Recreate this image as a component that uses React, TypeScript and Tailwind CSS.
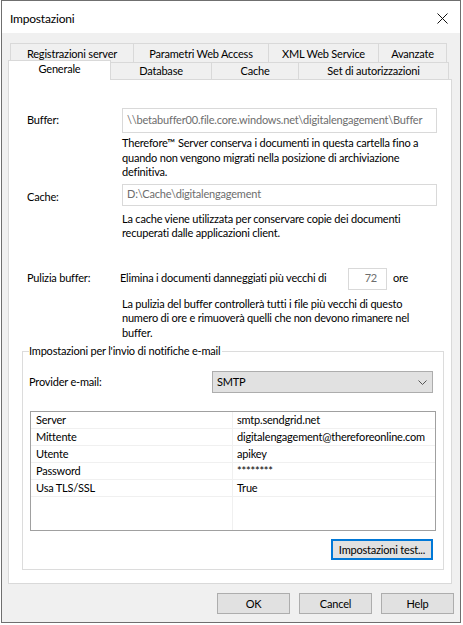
import React from 'react';

const font = { fontFamily: '"Segoe UI", Lato, "Noto Sans", sans-serif' };

const rows = [
  ['Server', 'smtp.sendgrid.net'],
  ['Mittente', 'digitalengagement@thereforeonline.com'],
  ['Utente', 'apikey'],
  ['Password', '********'],
  ['Usa TLS/SSL', 'True'],
];

export default function App() {
  return (
    <div className="w-[463px] h-[625px] bg-white text-[11px] tracking-[-0.2px] text-black" style={font}>
      <div className="ml-[1px] w-[460px] h-[623px] border border-[#6f6f6f] flex flex-col bg-[#f0f0f0]">
        {/* Title bar */}
        <div className="h-[32px] bg-white flex items-center justify-between pl-[8px] pr-[12px] shrink-0">
          <span className="text-[12px] pt-[4px]">Impostazioni</span>
          <svg width="11" height="11" viewBox="0 0 11 11" className="mt-[2px]">
            <path d="M0.5 0.5 L10.5 10.5 M10.5 0.5 L0.5 10.5" stroke="#111" strokeWidth="1" />
          </svg>
        </div>

        {/* Tabs */}
        <div className="mt-[10px] flex ml-[8px] h-[19px] whitespace-nowrap">
          {[
            ['Registrazioni server', 'w-[124px]'],
            ['Parametri Web Access', 'w-[135px]'],
            ['XML Web Service', 'w-[110px]'],
            ['Avanzate', 'w-[68px]'],
          ].map(([t, w], i) => (
            <div
              key={t}
              className={`${w} h-[19px] border-t border-r border-[#d9d9d9] ${i === 0 ? 'border-l' : ''} flex justify-center pt-[2px] leading-[15px]`}
            >
              {t}
            </div>
          ))}
        </div>
        <div className="-mt-[2px] flex items-end ml-[6px] h-[19px] whitespace-nowrap">
          <div className="relative top-[1px] z-10 w-[103px] h-[20px] bg-white border-t border-l border-r border-[#d9d9d9] flex justify-center leading-[15px]">
            Generale
          </div>
          {[
            ['Database', 'w-[101px]'],
            ['Cache', 'w-[87px]'],
            ['Set di autorizzazioni', 'w-[150px]'],
          ].map(([t, w]) => (
            <div
              key={t}
              className={`${w} h-[17px] border-t border-r border-[#d9d9d9] bg-[#f0f0f0] flex justify-center leading-[16px]`}
            >
              {t}
            </div>
          ))}
        </div>

        {/* Panel */}
        <div className="ml-[6px] w-[444px] h-[505px] bg-white border border-[#d9d9d9] flex flex-col">
          <div className="mt-[28px] flex items-center h-[25px] whitespace-nowrap">
            <span className="w-[113px] pl-[18px]">Buffer:</span>
            <div className="w-[315px] h-[25px] border border-[#d9d9d9] flex items-center pl-[4px] text-[#6d6d6d] overflow-hidden">
              \\betabuffer00.file.core.windows.net\digitalengagement\Buffer
            </div>
          </div>
          <p className="mt-[3px] ml-[113px] w-[318px] leading-[14.5px]">
            Therefore™ Server conserva i documenti in questa cartella fino a quando non vengono migrati nella posizione di archiviazione definitiva.
          </p>

          <div className="mt-[4px] flex items-center h-[22px] whitespace-nowrap">
            <span className="w-[113px] pl-[18px] pt-[6px]">Cache:</span>
            <div className="w-[315px] h-[22px] border border-[#d9d9d9] flex items-center pl-[4px] text-[#6d6d6d]">
              D:\Cache\digitalengagement
            </div>
          </div>
          <p className="mt-[6px] ml-[113px] w-[318px] leading-[14.5px]">
            La cache viene utilizzata per conservare copie dei documenti recuperati dalle applicazioni client.
          </p>

          <div className="mt-[27px] flex items-center h-[22px] whitespace-nowrap">
            <span className="w-[111px] pl-[18px]">Pulizia buffer:</span>
            <span className="w-[228px]">Elimina i documenti danneggiati più vecchi di</span>
            <div className="w-[39px] h-[22px] border border-[#d9d9d9] flex items-center justify-end pr-[9px] text-[#6d6d6d]">
              72
            </div>
            <span className="ml-[6px]">ore</span>
          </div>
          <p className="mt-[7px] ml-[113px] w-[318px] leading-[14.5px]">
            La pulizia del buffer controllerà tutti i file più vecchi di questo numero di ore e rimuoverà quelli che non devono rimanere nel buffer.
          </p>

          {/* Group box */}
          <div className="relative mt-[11px] ml-[13px] w-[422px] h-[219px] border border-[#dcdcdc] flex flex-col">
            <span className="absolute -top-[9px] left-[6px] bg-white pr-[2px] leading-[16px] whitespace-nowrap">
              Impostazioni per l'invio di notifiche e-mail
            </span>
            <div className="mt-[19px] flex items-center h-[22px]">
              <span className="w-[189px] pl-[6px]">Provider e-mail:</span>
              <div className="w-[221px] h-[22px] bg-[#e1e1e1] border border-[#adadad] flex items-center justify-between pl-[4px] pr-[5px]">
                <span>SMTP</span>
                <svg width="9" height="5" viewBox="0 0 9 5">
                  <path d="M0.5 0.5 L4.5 4.5 L8.5 0.5" stroke="#555" strokeWidth="1" fill="none" />
                </svg>
              </div>
            </div>

            <div className="mt-[18px] ml-[7px] w-[406px] h-[120px] border border-[#a0a0a0] flex flex-col">
              {rows.map(([k, v]) => (
                <div key={k} className="flex h-[17px] border-b border-[#f0f0f0] leading-[16px] whitespace-nowrap">
                  <span className="w-[202px] shrink-0 pl-[5px] border-r border-[#f0f0f0]">{k}</span>
                  <span className="pl-[4px]">{v}</span>
                </div>
              ))}
              <div className="flex-1 flex">
                <div className="w-[202px] border-r border-[#f0f0f0]" />
              </div>
            </div>

            <div className="mt-[8px] flex justify-end pr-[10px]">
              <button className="w-[102px] h-[21px] bg-[#e1e1e1] border-2 border-[#0078d7] flex items-center justify-center leading-none whitespace-nowrap">
                Impostazioni test...
              </button>
            </div>
          </div>
        </div>

        {/* Buttons */}
        <div className="mt-[9px] flex justify-end gap-[9px] pr-[6px]">
          {['OK', 'Cancel', 'Help'].map((b) => (
            <button
              key={b}
              className="w-[73px] h-[21px] bg-[#e1e1e1] border border-[#adadad] flex items-center justify-center leading-none"
            >
              {b}
            </button>
          ))}
        </div>
      </div>
    </div>
  );
}
